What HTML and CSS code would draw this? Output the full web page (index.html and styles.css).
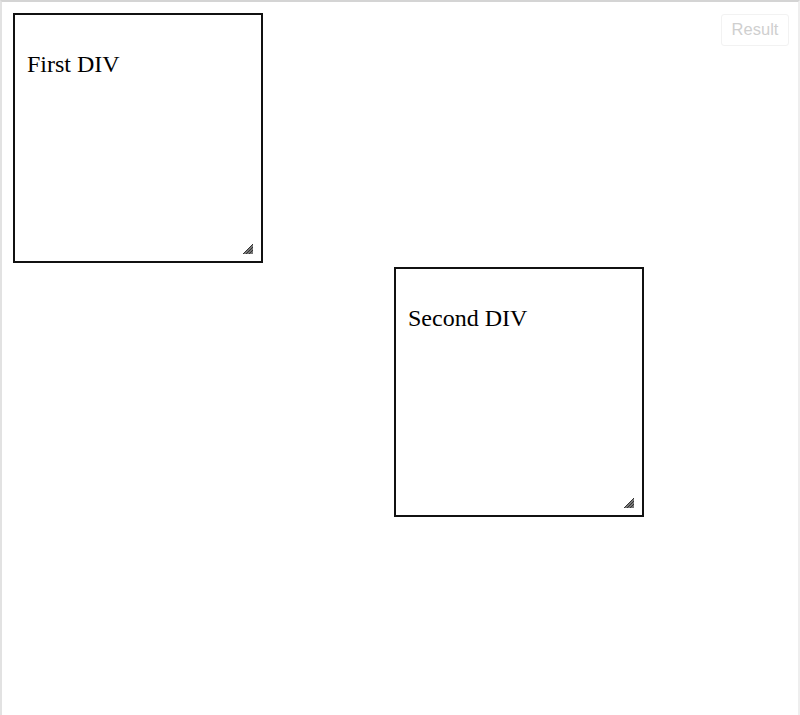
FILE: index.html
```html
<!DOCTYPE html>
<html>
<head>
<meta charset="utf-8">
<link rel="stylesheet" href="styles.css">
</head>
<body>
<div class="frame">
  <div class="result">Result</div>
  <div class="box">
    <p class="label">First DIV</p>
    <svg class="grip" width="12" height="12" viewBox="0 0 12 12"><path d="M1 12 L11 2 L11 12 Z" fill="#777"/><g stroke="#333" stroke-width="1"><line x1="1" y1="12" x2="11" y2="2"/><line x1="4" y1="12" x2="11" y2="5"/><line x1="7" y1="12" x2="11" y2="8"/></g></svg>
  </div>
  <div class="box second">
    <p class="label">Second DIV</p>
    <svg class="grip" width="12" height="12" viewBox="0 0 12 12"><path d="M1 12 L11 2 L11 12 Z" fill="#777"/><g stroke="#333" stroke-width="1"><line x1="1" y1="12" x2="11" y2="2"/><line x1="4" y1="12" x2="11" y2="5"/><line x1="7" y1="12" x2="11" y2="8"/></g></svg>
  </div>
</div>
</body>
</html>
```
FILE: styles.css
```css
html, body {
  margin: 0;
  padding: 0;
  background: #fff;
}
.frame {
  position: relative;
  box-sizing: border-box;
  width: 800px;
  height: 715px;
  border-top: 2px solid #d4d4d4;
  border-left: 2px solid #e2e2e2;
  border-right: 2px solid #eeeeee;
  padding: 11px 0 0 11px;
  font-family: "Liberation Serif", "Times New Roman", serif;
}
.box {
  position: relative;
  box-sizing: border-box;
  width: 250px;
  height: 250px;
  border: 2px solid #111;
  padding: 0 12px;
  background: #fff;
}
.second {
  margin-left: 381px;
  margin-top: 4px;
}
.label {
  margin: 36px 0 0;
  font-size: 24px;
  color: #000;
}
.grip {
  position: absolute;
  right: 7px;
  bottom: 7px;
}
.result {
  position: absolute;
  top: 12px;
  right: 9px;
  box-sizing: border-box;
  width: 68px;
  height: 32px;
  padding-bottom: 2px;
  border: 1px solid #f2f2f2;
  border-radius: 3px;
  font-family: "Liberation Sans", Arial, sans-serif;
  font-size: 16.5px;
  color: #cfcfcf;
  display: flex;
  align-items: center;
  justify-content: center;
}
```
